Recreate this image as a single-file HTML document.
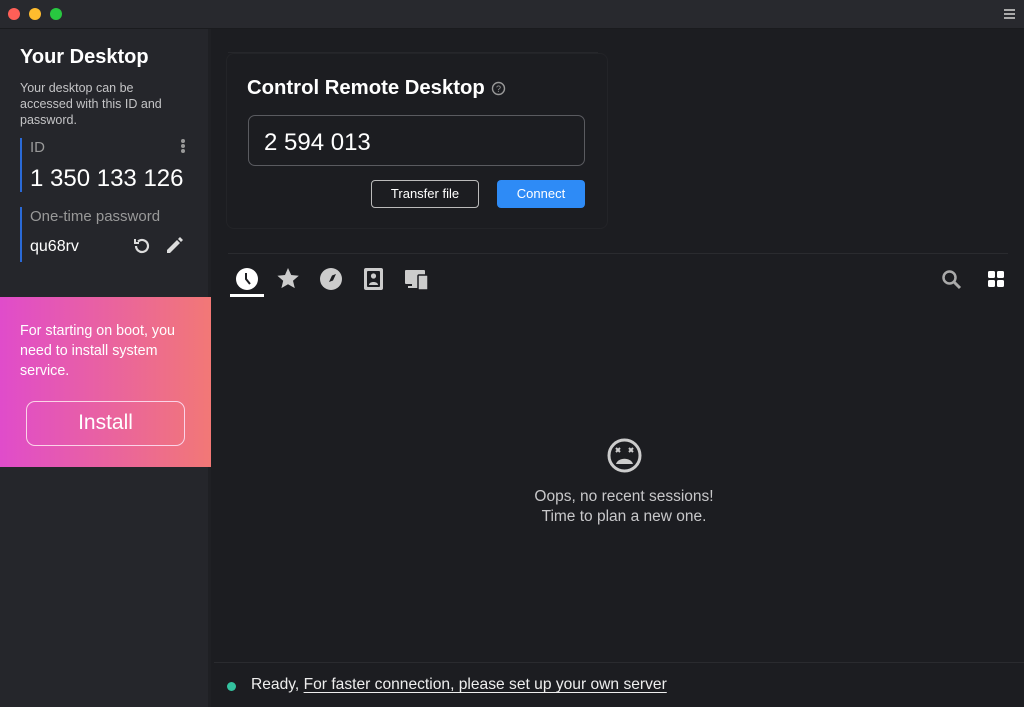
<!DOCTYPE html>
<html><head><meta charset="utf-8"><style>
*{margin:0;padding:0;box-sizing:border-box}
body{width:1024px;height:707px;background:#1c1d21;font-family:"Liberation Sans",sans-serif;color:#fff;position:relative;overflow:hidden}
.tb{position:absolute;left:0;top:0;width:1024px;height:29px;background:#28292e;border-bottom:1px solid #1a1b1e}
.dot{position:absolute;top:8px;width:12px;height:12px;border-radius:50%}
.side{position:absolute;left:0;top:29px;width:211px;height:678px;background:#25262b;border-right:3px solid #1f2024}
.abs{position:absolute}
.main{position:absolute;left:214px;top:29px;right:0;bottom:0;background:#1c1d21}
.card{position:absolute;left:226px;top:53px;width:382px;height:176px;border:1px solid #232428;border-radius:8px;background:#1c1d21}
.inp{position:absolute;left:248px;top:115px;width:337px;height:51px;border:1px solid #5a5b60;border-radius:7px;font-size:24px;padding:13px 0 0 15px}
.btn{position:absolute;top:180px;height:28px;border-radius:4px;font-size:13px;text-align:center;line-height:28px}
</style></head><body>
<div class="tb">
<div class="dot" style="left:8px;background:#fe5f57"></div>
<div class="dot" style="left:29px;background:#febc2e"></div>
<div class="dot" style="left:50px;background:#28c840"></div>
<div class="abs" style="right:9px;top:9px;width:11px">
<div style="height:2px;background:#aaa;margin-bottom:2px"></div><div style="height:2px;background:#aaa;margin-bottom:2px"></div><div style="height:2px;background:#aaa"></div></div>
</div>
<div class="side">
<div class="abs" style="left:20px;top:17px;font-size:20px;font-weight:bold">Your Desktop</div>
<div class="abs" style="left:20px;top:51px;font-size:12.5px;line-height:16px;color:#c4c4c6;width:156px">Your desktop can be accessed with this ID and password.</div>
<div class="abs" style="left:20px;top:109px;width:2px;height:54px;background:#2a6ad8"></div>
<div class="abs" style="left:30px;top:110px;font-size:15px;color:#999">ID</div>
<div class="abs" style="left:181px;top:110px;width:4px">
<div style="width:4px;height:4px;border-radius:2px;background:#999;margin-bottom:1px"></div><div style="width:4px;height:4px;border-radius:2px;background:#999;margin-bottom:1px"></div><div style="width:4px;height:4px;border-radius:2px;background:#999"></div></div>
<div class="abs" style="left:30px;top:136px;font-size:24px">1 350 133 126</div>
<div class="abs" style="left:20px;top:178px;width:2px;height:55px;background:#2a6ad8"></div>
<div class="abs" style="left:30px;top:179px;font-size:15px;color:#999">One-time password</div>
<div class="abs" style="left:30px;top:209px;font-size:16px">qu68rv</div>
<svg class="abs" style="left:132px;top:207px" width="20" height="20" viewBox="0 0 20 20" fill="none" stroke="#ddd" stroke-width="2.2"><path d="M4 10a6 6 0 1 0 2-4.5"/><path d="M3 3v4h4" stroke-width="2"/></svg>
<svg class="abs" style="left:164px;top:206px" width="21" height="21" viewBox="0 0 21 21"><path d="M3 15l10-10 3 3-10 10H3z M14 4l2-2 3 3-2 2z" fill="#ddd"/></svg>
<div class="abs" style="left:0;top:268px;width:211px;height:170px;background:linear-gradient(90deg,#e04ccb,#f27876)">
<div class="abs" style="left:20px;top:24px;font-size:14.3px;line-height:20px;width:185px">For starting on boot, you need to install system service.</div>
<div class="abs" style="left:26px;top:104px;width:159px;height:45px;border:1.5px solid #fbd4e8;border-radius:9px;text-align:center;font-size:21px;line-height:42px">Install</div>
</div>
</div>
<div class="main"></div>
<div class="abs" style="left:228px;top:52px;width:370px;height:1px;background:#26272b"></div>
<div class="card"></div>
<div class="abs" style="left:247px;top:77px;font-size:20.3px;font-weight:bold">Control Remote Desktop</div>
<svg class="abs" style="left:491px;top:81px" width="15" height="15" viewBox="0 0 15 15"><circle cx="7.5" cy="7.5" r="6" fill="none" stroke="#999" stroke-width="1.4"/><text x="7.5" y="11" font-size="9" text-anchor="middle" fill="#999" font-family="Liberation Sans">?</text></svg>
<div class="inp">2 594 013</div>
<div class="btn" style="left:371px;width:108px;border:1px solid #bbb;line-height:26px">Transfer file</div>
<div class="btn" style="left:497px;width:88px;background:#2e8bf6">Connect</div>
<div class="abs" style="left:228px;top:253px;width:780px;height:1px;background:#2a2b2f"></div>
<svg class="abs" style="left:230px;top:265px" width="210" height="32" viewBox="0 0 210 32">
<circle cx="17" cy="14" r="11" fill="#fff"/><path d="M16 8v6l4 5" stroke="#1c1d21" stroke-width="2" fill="none"/>
<rect x="0" y="29" width="34" height="3" fill="#fff"/>
<path d="M58 3l3.2 7 7.6.7-5.8 5 1.8 7.4L58 19.2l-6.6 3.9 1.8-7.4-5.8-5 7.6-.7z" fill="#ccc"/>
<circle cx="101" cy="14" r="11" fill="#ccc"/><path d="M106 9l-3 6.5-4 1.5 3-6.5z" fill="#1c1d21"/>
<rect x="134" y="3" width="19" height="22" rx="2" fill="#ccc"/><rect x="137" y="6" width="13" height="16" rx="1" fill="#1c1d21"/><circle cx="143.5" cy="11" r="2.6" fill="#ccc"/><path d="M139 20c0-4 9-4 9 0z" fill="#ccc"/>
<rect x="175" y="5" width="20" height="14" rx="1" fill="#ccc"/><rect x="182" y="19" width="6" height="3" fill="#ccc"/><rect x="178" y="21" width="10" height="2" fill="#ccc"/><rect x="188" y="10" width="10" height="15" rx="1" fill="#ccc" stroke="#1c1d21" stroke-width="1.5"/>
</svg>
<svg class="abs" style="left:940px;top:268px" width="24" height="24" viewBox="0 0 24 24"><circle cx="9.5" cy="9.5" r="6" fill="none" stroke="#aaa" stroke-width="2.5"/><path d="M14 14l6 6" stroke="#aaa" stroke-width="3"/></svg>
<svg class="abs" style="left:988px;top:271px" width="16" height="16" viewBox="0 0 16 16" fill="#fff"><rect x="0" y="0" width="7" height="7" rx="1.5"/><rect x="9" y="0" width="7" height="7" rx="1.5"/><rect x="0" y="9" width="7" height="7" rx="1.5"/><rect x="9" y="9" width="7" height="7" rx="1.5"/></svg>
<svg class="abs" style="left:606px;top:437px" width="37" height="37" viewBox="0 0 37 37"><circle cx="18.5" cy="18.5" r="15.5" fill="none" stroke="#ccc" stroke-width="3"/><path d="M10 11l4 4M14 11l-4 4M23 11l4 4M27 11l-4 4" stroke="#ccc" stroke-width="2"/><path d="M10 27c2-7 15-7 17 0z" fill="#ccc"/></svg>
<div class="abs" style="left:504px;top:487px;width:240px;text-align:center;font-size:15.5px;line-height:20px;color:#c8c8ca">Oops, no recent sessions!<br>Time to plan a new one.</div>
<div class="abs" style="left:214px;top:662px;right:0;height:1px;background:#2a2b2f"></div>
<div class="abs" style="left:227px;top:682px;width:9px;height:9px;border-radius:50%;background:#33c29f"></div>
<div class="abs" style="left:251px;top:676px;font-size:15.6px;color:#eee;white-space:nowrap">Ready, <span style="text-decoration:underline;text-underline-offset:3px">For faster connection, please set up your own server</span></div>
</body></html>
